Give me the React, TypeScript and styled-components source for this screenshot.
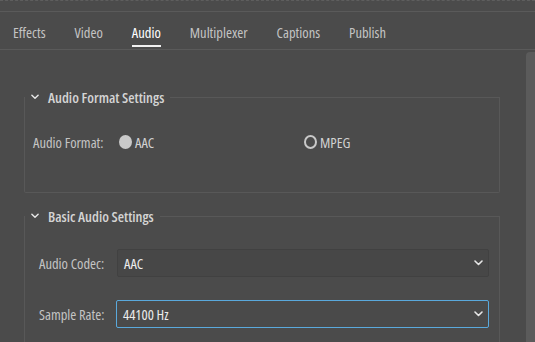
import React from "react";
import styled, { createGlobalStyle } from "styled-components";

const FONT = `"Open Sans", "Noto Sans", sans-serif`;

const Global = createGlobalStyle`
  html, body { margin: 0; padding: 0; background: #4b4b4b; }
  body { font-family: ${FONT}; font-stretch: 79%; }
`;

const Page = styled.div`
  width: 535px;
  height: 342px;
  overflow: hidden;
  background: #4b4b4b;
  display: flex;
  flex-direction: column;
  font-family: ${FONT};
  font-stretch: 79%;
  white-space: nowrap;
`;

const TopStrip = styled.div`
  height: 12px;
  box-sizing: border-box;
  border-top: 1px dashed #5e5e5e;
  border-bottom: 1px solid #5a5a5a;
`;

const TabBar = styled.div`
  height: 38px;
  box-sizing: border-box;
  border-bottom: 1px solid #5a5a5a;
  display: flex;
  gap: 29px;
  padding-left: 13px;
`;

const Tab = styled.div<{ $active?: boolean }>`
  position: relative;
  display: flex;
  align-items: center;
  font-size: 14.5px;
  color: ${(p) => (p.$active ? "#ffffff" : "#c4c4c4")};
  padding-top: 3px;
  &::after {
    content: "";
    display: ${(p) => (p.$active ? "block" : "none")};
    position: absolute;
    left: 0;
    right: 0;
    bottom: 2px;
    height: 2px;
    background: #f0f0f0;
  }
`;

const Body = styled.div`
  flex: 1;
  display: flex;
  min-height: 0;
`;

const Main = styled.div`
  flex: 1;
  padding: 47px 26px 0 24px;
  display: flex;
  flex-direction: column;
  gap: 23px;
`;

const Scrollbar = styled.div`
  width: 9px;
  margin-top: 2px;
  background: #5b5b5b;
  border-radius: 4px 0 0 0;
`;

const Section = styled.section`
  border: 1px solid #585858;
  border-top: none;
  display: flex;
  flex-direction: column;
  border-radius: 0 0 2px 2px;
`;

const Header = styled.div`
  margin-top: -9px;
  height: 18px;
  display: flex;
  align-items: center;
  padding-left: 6px;
`;

const Title = styled.div`
  font-size: 14.5px;
  font-weight: 600;
  color: #d4d4d4;
  margin-left: 9px;
`;

const Rule = styled.div`
  flex: 1;
  height: 1px;
  background: #585858;
  margin-left: 6px;
`;

const FormatBody = styled.div`
  padding: 26px 0 40px 8px;
`;

const FormatRow = styled.div`
  height: 20px;
  display: flex;
  align-items: center;
`;

const Label = styled.div<{ $w: number }>`
  width: ${(p) => p.$w}px;
  flex: none;
  font-size: 14.5px;
  color: #c4c4c4;
`;

const RadioOption = styled.div<{ $w?: number }>`
  display: flex;
  align-items: center;
  gap: 3px;
  width: ${(p) => (p.$w ? `${p.$w}px` : "auto")};
  font-size: 14.5px;
  color: #d2d2d2;
`;

const RadioDot = styled.span<{ $checked?: boolean }>`
  width: 13px;
  height: 14px;
  box-sizing: border-box;
  border-radius: 50%;
  background: ${(p) => (p.$checked ? "#c9c9c9" : "transparent")};
  border: ${(p) => (p.$checked ? "none" : "2px solid #c9c9c9")};
`;

const BasicBody = styled.div`
  padding: 24px 10px 20px 14px;
  display: flex;
  flex-direction: column;
  gap: 23px;
`;

const FieldRow = styled.div`
  display: flex;
  align-items: center;
`;

const Select = styled.div<{ $focused?: boolean }>`
  flex: 1;
  height: 28px;
  box-sizing: border-box;
  border: 1px solid ${(p) => (p.$focused ? "#5aa9dc" : "#414141")};
  background: ${(p) => (p.$focused ? "#4a4a4a" : "#474747")};
  border-radius: 2px;
  display: flex;
  align-items: center;
  justify-content: space-between;
  padding: 0 5px 0 6px;
  font-size: 14.5px;
  color: #ececec;
`;

const Chevron = ({ size = 9 }: { size?: number }) => (
  <svg width={size} height={6} viewBox="0 0 9 6" fill="none">
    <path d="M1 1 L4.5 4.5 L8 1" stroke="#e6e6e6" strokeWidth="1.6" strokeLinecap="round" strokeLinejoin="round" />
  </svg>
);

const tabs = ["Effects", "Video", "Audio", "Multiplexer", "Captions", "Publish"];

export default function App() {
  return (
    <Page>
      <Global />
      <TopStrip />
      <TabBar>
        {tabs.map((t) => (
          <Tab key={t} $active={t === "Audio"}>{t}</Tab>
        ))}
      </TabBar>
      <Body>
        <Main>
          <Section>
            <Header>
              <Chevron size={8} />
              <Title>Audio Format Settings</Title>
              <Rule />
            </Header>
            <FormatBody>
              <FormatRow>
                <Label $w={86}>Audio Format:</Label>
                <RadioOption $w={185}>
                  <RadioDot $checked />
                  AAC
                </RadioOption>
                <RadioOption>
                  <RadioDot />
                  MPEG
                </RadioOption>
              </FormatRow>
            </FormatBody>
          </Section>
          <Section>
            <Header>
              <Chevron size={8} />
              <Title>Basic Audio Settings</Title>
              <Rule />
            </Header>
            <BasicBody>
              <FieldRow>
                <Label $w={78}>Audio Codec:</Label>
                <Select>
                  AAC
                  <Chevron />
                </Select>
              </FieldRow>
              <FieldRow>
                <Label $w={77}>Sample Rate:</Label>
                <Select $focused>
                  44100 Hz
                  <Chevron />
                </Select>
              </FieldRow>
            </BasicBody>
          </Section>
        </Main>
        <Scrollbar />
      </Body>
    </Page>
  );
}
